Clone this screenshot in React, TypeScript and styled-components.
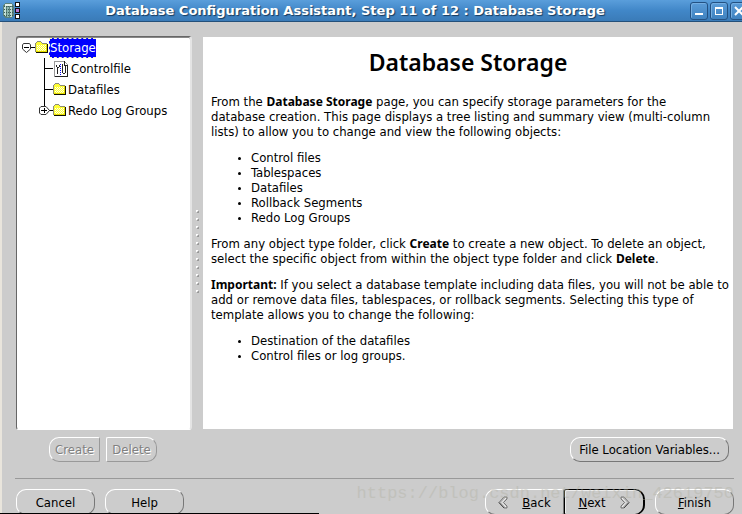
import React from "react";
import styled, { createGlobalStyle, css } from "styled-components";

const GlobalStyle = createGlobalStyle`
  * { box-sizing: border-box; }
  body { margin: 0; background: #cccccc; }
  button { font: inherit; color: inherit; }
`;

const Window = styled.div`
  position: relative;
  display: flex;
  flex-direction: column;
  height: 100vh;
  overflow: hidden;
  background: #cccccc;
  color: #000;
  font-family: "DejaVu Sans Condensed", "DejaVu Sans", sans-serif;
  font-size: 13px;
  line-height: 15px;
`;

const TitleBar = styled.header`
  display: flex;
  align-items: center;
  height: 22px;
  flex: none;
  padding-left: 3px;
  overflow: hidden;
  background: linear-gradient(#5a9edb, #4187c8 50%, #3a7bb8);
  border-bottom: 1px solid #24507a;
`;

const Title = styled.h1`
  flex: 1;
  margin: 0;
  text-align: center;
  white-space: nowrap;
  color: #fff;
  font: bold 13px/20px "DejaVu Sans", sans-serif;
  text-shadow: 1px 1px 1px #173a5c;
`;

const WindowControls = styled.div`
  display: flex;
  gap: 2px;
  margin-right: -6px;
`;

const WindowButton = styled.button`
  display: grid;
  place-items: center;
  width: 18px;
  height: 18px;
  padding: 0;
  border: 1px solid #235182;
  border-radius: 3px;
  background: linear-gradient(#5b9cd8, #3f82c0);
  box-shadow: inset 1px 1px 0 #74aee2;
`;

const Frame = styled.div`
  display: flex;
  flex-direction: column;
  flex: 1;
  min-height: 0;
  padding: 14px 8px 0 13px;
  border-left: 2px solid #e9e5dc;
`;

const Workspace = styled.main`
  display: grid;
  grid-template-columns: 176px 11px minmax(0, 1fr);
  grid-template-rows: minmax(0, 1fr) auto;
  flex: 1;
  min-height: 0;
  padding: 0 1px;
`;

const TreePanel = styled.nav`
  border: 1px solid;
  border-right-width: 2px;
  border-color: #666 #e4e4e4 #fff #666;
  border-radius: 3px;
  background: #fff;
  box-shadow: inset 0 1px 0 #888;
  padding-left: 4px;
`;

const Branch = styled.ul<{ $nested?: boolean }>`
  list-style: none;
  margin: 0;
  padding: 0 0 0 ${(p) => (p.$nested ? 18 : 0)}px;
`;

const TreeRow = styled.div`
  display: flex;
  align-items: center;
  height: 21px;
`;

const TreeLabel = styled.span<{ $selected?: boolean }>`
  padding: 2px 1px;
  line-height: 16px;
  white-space: nowrap;
  ${(p) =>
    p.$selected &&
    css`
      padding: 1px 0;
      color: #fff;
      background: #0000ff;
      border: 1px dashed #ffffc0;
      border-width: 1px 0 1px 1px;
    `}
`;

const Splitter = styled.div`
  display: flex;
  flex-direction: column;
  align-items: center;
  justify-content: center;
  gap: 5px;
  padding-top: 36px;
`;

const Grip = styled.i`
  width: 3px;
  height: 3px;
  border: 1px solid;
  border-color: #fff #999 #999 #fff;
`;

const Document = styled.article`
  margin: 1px 0;
  padding: 13px 0 0 8px;
  overflow: hidden;
  background: #fff;

  p,
  ul {
    margin: 0 0 11px;
  }
  ul {
    padding-left: 40px;
  }
  li::marker {
    font-size: 10px;
  }
  b {
    font-family: "Noto Sans", sans-serif;
    font-size: 12px;
    line-height: 12px;
  }
`;

const Heading = styled.h2`
  margin: 0 8px 20px 0;
  text-align: center;
  font-family: "Noto Sans", sans-serif;
  font-size: 23px;
  line-height: 24px;
  font-weight: 600;
`;

const Actions = styled.div<{ $end?: boolean }>`
  display: flex;
  justify-content: ${(p) => (p.$end ? "flex-end" : "center")};
  gap: 6px;
  grid-column: ${(p) => (p.$end ? 3 : 1)};
  padding: 7px ${(p) => (p.$end ? 4 : 0)}px 16px 0;
  margin-left: ${(p) => (p.$end ? 0 : -2)}px;
`;

type Shape = "round" | "left" | "right";
const radii: Record<Shape, string> = {
  round: "10px",
  left: "10px 2px 2px 10px",
  right: "2px 10px 10px 2px",
};

const Button = styled.button<{ $shape?: Shape; $wide?: boolean; $primary?: boolean }>`
  display: flex;
  align-items: center;
  justify-content: center;
  gap: 14px;
  height: ${(p) => (p.$wide ? 26 : 25)}px;
  min-width: ${(p) => (p.$wide ? 79 : 51)}px;
  padding: 0 8px;
  white-space: nowrap;
  border: 1px solid;
  border-color: #fff #777 #777 #fff;
  border-radius: ${(p) => radii[p.$shape ?? "round"]};
  background: #cccccc;

  &:disabled {
    color: #808080;
    padding: 0 4px;
    border-color: #fff #999 #999 #fff;
    text-shadow: 1px 1px 0 #fff;
  }

  ${(p) =>
    p.$primary &&
    css`
      min-width: 81px;
      border: 1px solid #000;
      border-right-width: 2px;
      box-shadow: inset 1px 1px 0 #eee;
    `}
`;

const Footer = styled.footer`
  display: flex;
  gap: 10px;
  padding: 10px 0 0 1px;
  margin-bottom: -1px;
  border-top: 1px solid #999;
`;

const Wizard = styled.div`
  display: flex;
  margin-left: auto;
`;

const Watermark = styled.div`
  position: absolute;
  right: 8px;
  bottom: 10px;
  color: #b2b2a4;
  opacity: 0.4;
  font: 17px/20px "Liberation Mono", monospace;
  pointer-events: none;
`;

const BottomEdge = styled.div`
  position: absolute;
  left: 0;
  bottom: 0;
  width: 43%;
  height: 1px;
  background: #000;
`;

const AppIcon = () => (
  <svg width="17" height="17" viewBox="0 0 17 17" shapeRendering="crispEdges">
    <path d="M0 3H1V2H2V1H9V2H10V3H11V14H10V15H9V16H2V15H1V14H0Z" fill="#5c827c" />
    <path d="M2 2H9V4H2Z" fill="#e2f2ec" />
    <path d="M1 4H3V14H1Z" fill="#c6e2d8" />
    <path d="M4 5H6V15H4Z" fill="#8fb8ae" />
    <path d="M7 5H9V15H7Z" fill="#c0dcd2" />
    <path d="M1 4.500H10M1 7.500H10M1 10.500H10M1 13.500H10" stroke="#3c5e58" strokeDasharray="1 1" />
    <path d="M12 0H17V5H12ZM12 6H17V11H12ZM12 12H17V17H12Z" fill="#111" />
    <path d="M13 1H16V4H13Z" fill="#fff" />
    <path d="M13 7H16V10H13Z" fill="#bd78d5" />
    <path d="M13 13H16V16H13Z" fill="#fff" />
  </svg>
);

const Folder = () => (
  <svg width="14" height="13" viewBox="0 0 14 13" shapeRendering="crispEdges">
    <path d="M1 2H2V1H6V2H7V3H12V11H1Z" fill="#ffff33" />
    <path d="M2 4.500H11M2 6.500H11M2 8.500H11" stroke="#fffff0" strokeDasharray="1 1" />
    <path d="M3 5.500H11M3 7.500H11M3 9.500H11" stroke="#ffffc8" strokeDasharray="1 1" />
    <path d="M0 2H1V11H0ZM1 1H2V2H1ZM2 0H6V1H2ZM6 1H7V2H6ZM7 2H12V3H7Z" fill="#8c8c78" />
    <path d="M11 3H12V11H1V10H11Z" fill="#e6dc00" />
    <path d="M12 3H13V12H1V11H12Z" fill="#111100" />
  </svg>
);

const ControlFile = () => (
  <svg width="17" height="16" viewBox="0 0 17 16" shapeRendering="crispEdges">
    <path d="M1.500 .500H11.500L14.500 3.500V15.500H1.500Z" fill="#fff" stroke="#999" />
    <path d="M11 0V4H15M14.500 4V15.500H2" fill="none" stroke="#222" />
    <path d="M3 4H4V6H3ZM4 6H6V7H4ZM6 4H7V6H6ZM4 7H5V13H4ZM9 3H10V11H9ZM10 12H12V13H10ZM12 5H13V12H12ZM9 11H10V12H9Z" fill="#222" />
    <path d="M7.500 3V14" stroke="#0000ff" strokeDasharray="1 1" />
  </svg>
);

const RootToggle = () => (
  <svg width="14" height="21" viewBox="0 0 14 21">
    <path d="M2.500 6.500H8.500L9.500 8V12L5.500 15.500L1.500 12V8Z" fill="#fff" stroke="#333" />
    <path d="M3 10.500H8M10 10.500H14" stroke="#000" shapeRendering="crispEdges" />
  </svg>
);

const Connector = () => (
  <svg width="14" height="21" viewBox="0 0 14 21" shapeRendering="crispEdges">
    <path d="M5.500 0V21M5 10.500H14" stroke="#000" />
  </svg>
);

const ClosedToggle = () => (
  <svg width="14" height="21" viewBox="0 0 14 21">
    <path d="M5.500 0V6M9 10.500H14" stroke="#000" shapeRendering="crispEdges" />
    <path d="M2 6.500H7L10.500 10.500L7 14.500H2L.500 13V8Z" fill="#fff" stroke="#333" />
    <path d="M2 10.500H8M5.500 8V13" stroke="#000" shapeRendering="crispEdges" />
  </svg>
);

const Chevron = ({ back }: { back?: boolean }) => (
  <svg width="10" height="13" viewBox="0 0 10 13">
    <g transform={back ? "matrix(-1 0 0 1 10 0)" : undefined}>
      <path d="M1 1H4L9 6.500L4 12H1V10L4.500 6.500L1 3Z" fill="#bbb" stroke="#777" />
      <path d="M2 2L6 6.500L2 11" fill="none" stroke="#f4f4f4" />
      <path d="M4 12L9 6.500" stroke="#444" />
    </g>
  </svg>
);

const GRIPS = Array.from({ length: 11 }, (_, i) => i);

export default function App() {
  return (
    <Window>
      <GlobalStyle />
      <TitleBar>
        <AppIcon />
        <Title>Database Configuration Assistant, Step 11 of 12 : Database Storage</Title>
        <WindowControls>
          <WindowButton aria-label="Minimize">
            <svg width="12" height="12"><path d="M2 9H10" stroke="#fff" strokeWidth="2" /></svg>
          </WindowButton>
          <WindowButton aria-label="Maximize">
            <svg width="12" height="12" shapeRendering="crispEdges">
              <path d="M2 2H10V10H2ZM3 4V9H9V4Z" fill="#fff" fillRule="evenodd" />
            </svg>
          </WindowButton>
          <WindowButton aria-label="Close">
            <svg width="12" height="12"><path d="M2 2L10 10M10 2L2 10" stroke="#fff" strokeWidth="2" /></svg>
          </WindowButton>
        </WindowControls>
      </TitleBar>

      <Frame>
        <Workspace>
          <TreePanel aria-label="Storage objects">
            <Branch role="tree">
              <li role="treeitem" aria-expanded="true" aria-selected="true">
                <TreeRow><RootToggle /><Folder /><TreeLabel $selected>Storage</TreeLabel></TreeRow>
                <Branch $nested role="group">
                  <li role="treeitem">
                    <TreeRow><Connector /><ControlFile /><TreeLabel>Controlfile</TreeLabel></TreeRow>
                  </li>
                  <li role="treeitem">
                    <TreeRow><Connector /><Folder /><TreeLabel>Datafiles</TreeLabel></TreeRow>
                  </li>
                  <li role="treeitem" aria-expanded="false">
                    <TreeRow><ClosedToggle /><Folder /><TreeLabel>Redo Log Groups</TreeLabel></TreeRow>
                  </li>
                </Branch>
              </li>
            </Branch>
          </TreePanel>
          <Splitter>{GRIPS.map((n) => <Grip key={n} />)}</Splitter>
          <Document>
            <Heading>Database Storage</Heading>
            <p>
              From the <b>Database Storage</b> page, you can specify storage parameters for the
              <br />
              database creation. This page displays a tree listing and summary view (multi-column
              <br />
              lists) to allow you to change and view the following objects:
            </p>
            <ul>
              <li>Control files</li>
              <li>Tablespaces</li>
              <li>Datafiles</li>
              <li>Rollback Segments</li>
              <li>Redo Log Groups</li>
            </ul>
            <p>
              From any object type folder, click <b>Create</b> to create a new object. To delete an
              object,
              <br />
              select the specific object from within the object type folder and click <b>Delete</b>.
            </p>
            <p>
              <b>Important:</b> If you select a database template including data files, you will not
              be able to
              <br />
              add or remove data files, tablespaces, or rollback segments. Selecting this type of
              <br />
              template allows you to change the following:
            </p>
            <ul>
              <li>Destination of the datafiles</li>
              <li>Control files or log groups.</li>
            </ul>
          </Document>
          <Actions>
            <Button $shape="left" disabled>Create</Button>
            <Button $shape="right" disabled>Delete</Button>
          </Actions>
          <Actions $end>
            <Button>File Location Variables...</Button>
          </Actions>
        </Workspace>

        <Footer>
          <Button $wide>Cancel</Button>
          <Button $wide>Help</Button>
          <Wizard>
            <Button $wide $shape="left"><Chevron back /><span><u>B</u>ack</span></Button>
            <Button $wide $shape="right" $primary><span><u>N</u>ext</span><Chevron /></Button>
          </Wizard>
          <Button $wide><span><u>F</u>inish</span></Button>
        </Footer>
      </Frame>
      <Watermark>https://blog.csdn.net/weixin_42619750</Watermark>
      <BottomEdge />
    </Window>
  );
}
